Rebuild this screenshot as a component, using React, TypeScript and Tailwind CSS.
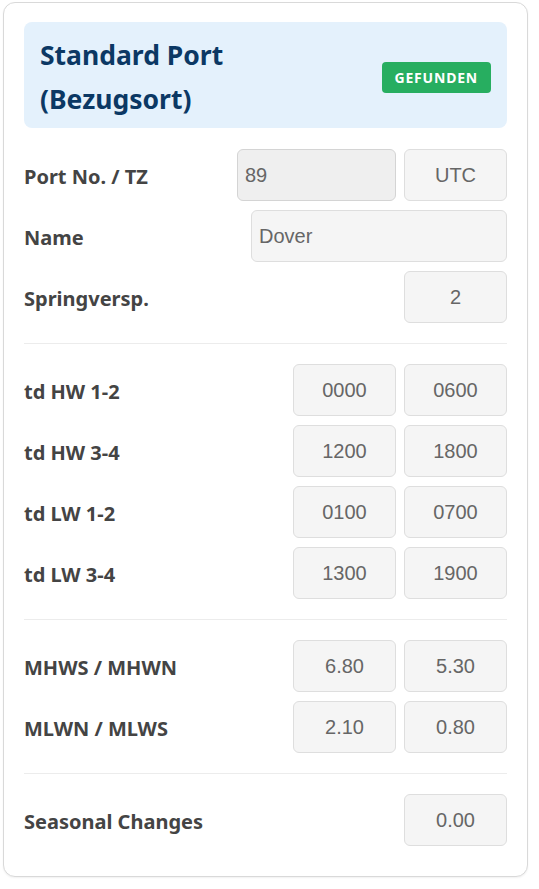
type Field = {
  value: string;
  width: string;
  align?: 'left' | 'center';
  muted?: boolean;
};

type Row = {
  label: string;
  fields: Field[];
};

const sections: Row[][] = [
  [
    {
      label: 'Port No. / TZ',
      fields: [
        { value: '89', width: 'w-[159px]', align: 'left', muted: true },
        { value: 'UTC', width: 'w-[103px]' },
      ],
    },
    { label: 'Name', fields: [{ value: 'Dover', width: 'w-[256px]', align: 'left' }] },
    { label: 'Springversp.', fields: [{ value: '2', width: 'w-[103px]' }] },
  ],
  [
    {
      label: 'td HW 1-2',
      fields: [
        { value: '0000', width: 'w-[103px]' },
        { value: '0600', width: 'w-[103px]' },
      ],
    },
    {
      label: 'td HW 3-4',
      fields: [
        { value: '1200', width: 'w-[103px]' },
        { value: '1800', width: 'w-[103px]' },
      ],
    },
    {
      label: 'td LW 1-2',
      fields: [
        { value: '0100', width: 'w-[103px]' },
        { value: '0700', width: 'w-[103px]' },
      ],
    },
    {
      label: 'td LW 3-4',
      fields: [
        { value: '1300', width: 'w-[103px]' },
        { value: '1900', width: 'w-[103px]' },
      ],
    },
  ],
  [
    {
      label: 'MHWS / MHWN',
      fields: [
        { value: '6.80', width: 'w-[103px]' },
        { value: '5.30', width: 'w-[103px]' },
      ],
    },
    {
      label: 'MLWN / MLWS',
      fields: [
        { value: '2.10', width: 'w-[103px]' },
        { value: '0.80', width: 'w-[103px]' },
      ],
    },
  ],
  [{ label: 'Seasonal Changes', fields: [{ value: '0.00', width: 'w-[103px]' }] }],
];

function FieldBox({ field }: { field: Field }) {
  return (
    <input
      type="text"
      readOnly
      value={field.value}
      className={`${field.width} h-[52px] rounded-md border px-[7px] font-['Liberation_Sans',Arial,sans-serif] text-[20px] text-[#666] outline-none ${
        field.align === 'left' ? 'text-left' : 'text-center'
      } ${field.muted ? 'border-[#d4d4d4] bg-[#efefef]' : 'border-[#dedede] bg-[#f5f5f5]'}`}
    />
  );
}

export default function App() {
  return (
    <div className="min-h-screen bg-white pt-[2px] pl-[3px] font-['Noto_Sans',sans-serif]">
      <div className="w-[525px] rounded-xl border border-[#d9d9d9] bg-white px-5 pt-[19px] pb-[30px] shadow-[0_1px_2px_rgba(0,0,0,0.06)]">
        <div className="mb-[21px] flex items-center justify-between rounded-lg bg-[#e4f1fc] pt-[11px] pb-[7px] pl-4 pr-4">
          <h2 className="text-[26.5px] font-bold leading-[44px] text-[#0b3864]">
            Standard Port
            <br />
            (Bezugsort)
          </h2>
          <span className="rounded bg-[#27ae60] px-[13px] py-[6px] text-[14px] font-bold leading-[19px] tracking-[0.8px] text-white">
            GEFUNDEN
          </span>
        </div>

        {sections.map((rows, i) => (
          <div key={i}>
            {i > 0 && <div className="my-5 h-px bg-[#ececec]" />}
            <div className="flex flex-col gap-[9px]">
              {rows.map((row) => (
                <div key={row.label} className="flex items-center justify-between">
                  <span className="pt-[4px] text-[20px] font-bold text-[#444]">{row.label}</span>
                  <div className="flex gap-2">
                    {row.fields.map((f, j) => (
                      <FieldBox key={j} field={f} />
                    ))}
                  </div>
                </div>
              ))}
            </div>
          </div>
        ))}
      </div>
    </div>
  );
}
